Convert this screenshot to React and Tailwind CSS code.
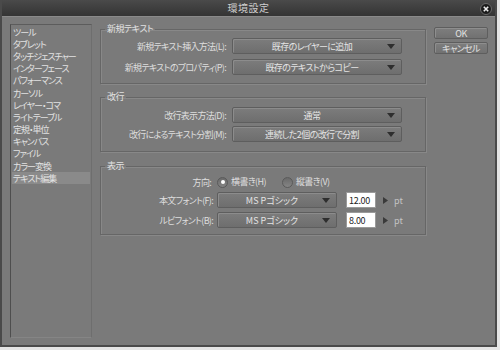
const FONT = "font-['Noto_Sans_CJK_JP','Noto_Sans',sans-serif] [font-feature-settings:'palt']";

const CATEGORIES = [
  'ツール',
  'タブレット',
  'タッチジェスチャー',
  'インターフェース',
  'パフォーマンス',
  'カーソル',
  'レイヤー・コマ',
  'ライトテーブル',
  '定規・単位',
  'キャンバス',
  'ファイル',
  'カラー変換',
  'テキスト編集',
];

function Arrow() {
  return (
    <svg width="8" height="5" viewBox="0 0 8 5" className="shrink-0">
      <path d="M0 0 H8 L4 5 Z" fill="#2e2e2e" />
    </svg>
  );
}

function Dropdown({ value, width, tight = true }) {
  return (
    <div
      className={`${width} h-[16px] flex items-center pl-[4px] pr-[6px] rounded-[2px] border border-[#5e5e5e] bg-gradient-to-b from-[#7c7c7c] to-[#6e6e6e] shadow-[inset_1px_1px_0_#8c8c8c]`}
    >
      <span
        className={`flex-1 text-center text-[9px] leading-none text-[#e4e4e4] whitespace-nowrap ${
          tight ? 'tracking-[-0.6px]' : 'tracking-[0px]'
        }`}
      >
        {value}
      </span>
      <Arrow />
    </div>
  );
}

function Group({ title, children, className }) {
  return (
    <fieldset className={`border border-[#666] shadow-[inset_1px_1px_0_#888,1px_1px_0_#888] px-0 ${className}`}>
      <legend className="ml-[4px] px-[2px] text-[9px] leading-[12px] tracking-[-0.5px] text-[#e2e2e2]">{title}</legend>
      {children}
    </fieldset>
  );
}

function Row({ label, children, labelWidth = 'w-[125px]', gap = 'ml-[6px]' }) {
  return (
    <div className="flex items-center">
      <span className={`${labelWidth} text-right text-[9px] leading-none tracking-[-0.7px] text-[#dedede] whitespace-nowrap`}>{label}</span>
      <div className={`${gap} flex items-center`}>{children}</div>
    </div>
  );
}

function Radio({ checked }) {
  return (
    <span className="w-[11px] h-[11px] rounded-full border border-[#5a5a5a] bg-gradient-to-b from-[#6a6a6a] to-[#858585] flex items-center justify-center shrink-0">
      {checked && <span className="w-[4px] h-[4px] rounded-full bg-white" />}
    </span>
  );
}

function SizeField({ value }) {
  return (
    <div className="flex items-center">
      <div className="ml-[9px] w-[30px] h-[16px] bg-white border border-[#9a9a9a] flex items-center pl-[2px] text-[9px] leading-none tracking-[-0.3px] text-[#222]">
        {value}
      </div>
      <svg width="5" height="7" viewBox="0 0 5 7" className="ml-[7px]">
        <path d="M0 0 L5 3.5 L0 7 Z" fill="#3a3a3a" />
      </svg>
      <span className="ml-[6px] text-[9px] leading-none text-[#c4c4c4]">pt</span>
    </div>
  );
}

export default function App() {
  return (
    <div className={`w-[500px] h-[350px] bg-[#e4e4e4] ${FONT}`}>
      <div className="w-[497px] h-[347px] border-2 border-t-0 border-[#4a4a4a] bg-[#7a7a7a] flex flex-col">
        {/* title bar */}
        <div className="h-[17px] shrink-0 bg-gradient-to-b from-[#4a4a4a] to-[#343434] border-b border-[#8a8a8a] flex items-center justify-center relative">
          <span className="text-[10px] leading-none text-[#cfcfcf] tracking-[0.5px]">環境設定</span>
          <svg width="12" height="12" viewBox="0 0 12 12" className="absolute right-[3px] top-[3px]">
            <circle cx="6" cy="6" r="5.5" fill="#1c1c1c" stroke="#6a6a6a" />
            <path d="M3.8 3.8 L8.2 8.2 M8.2 3.8 L3.8 8.2" stroke="#eee" strokeWidth="1.6" />
          </svg>
        </div>

        <div className="flex pl-[8px] pt-[6px]">
          {/* category list */}
          <div className="mt-[1px] w-[82px] h-[314px] border border-[#5c5c5c] border-l-[#4e4e4e] border-b-[#858585] border-r-[#6e6e6e] pt-[1px] px-[1px]">
            {CATEGORIES.map((c, i) => (
              <div
                key={c}
                className={`h-[12.2px] flex items-center pl-[1px] text-[9px] leading-none tracking-[-1px] text-[#e2e2e2] whitespace-nowrap ${
                  i === CATEGORIES.length - 1 ? 'bg-[#8a8a8a]' : ''
                }`}
              >
                {c}
              </div>
            ))}
          </div>

          {/* groups */}
          <div className="ml-[8px] w-[326px] flex flex-col">
            <Group title="新規テキスト" className="pt-[3px] pb-[8px]">
              <div className="flex flex-col gap-[5px]">
                <Row label="新規テキスト挿入方法(L):">
                  <Dropdown value="既存のレイヤーに追加" width="w-[170px]" />
                </Row>
                <Row label="新規テキストのプロパティ(P):">
                  <Dropdown value="既存のテキストからコピー" width="w-[170px]" />
                </Row>
              </div>
            </Group>

            <Group title="改行" className="mt-[7px] pt-[4px] pb-[9px]">
              <div className="flex flex-col gap-[3px]">
                <Row label="改行表示方法(D):">
                  <Dropdown value="通常" width="w-[170px]" />
                </Row>
                <Row label="改行によるテキスト分割(M):">
                  <Dropdown value="連続した2個の改行で分割" width="w-[170px]" />
                </Row>
              </div>
            </Group>

            <Group title="表示" className="mt-[8px] pt-[4px] pb-[6px]">
              <div className="flex flex-col">
                <Row label="方向:" labelWidth="w-[110px]" gap="ml-[6px]">
                  <Radio checked />
                  <span className="ml-[3px] text-[9px] leading-[12px] tracking-[-0.6px] text-[#dedede]">横書き(H)</span>
                  <span className="ml-[16px]">
                    <Radio />
                  </span>
                  <span className="ml-[3px] text-[9px] leading-[12px] tracking-[-0.6px] text-[#dedede]">縦書き(V)</span>
                </Row>
                <div className="mt-[4px]">
                  <Row label="本文フォント(F):" labelWidth="w-[112px]" gap="ml-[4px]">
                    <Dropdown value="MS Pゴシック" width="w-[120px]" tight={false} />
                    <SizeField value="12.00" />
                  </Row>
                </div>
                <div className="mt-[4px]">
                  <Row label="ルビフォント(B):" labelWidth="w-[112px]" gap="ml-[4px]">
                    <Dropdown value="MS Pゴシック" width="w-[120px]" tight={false} />
                    <SizeField value="8.00" />
                  </Row>
                </div>
              </div>
            </Group>
          </div>

          {/* buttons */}
          <div className="ml-[8px] w-[54px] pt-[4px] flex flex-col gap-[3px]">
            {['OK', 'キャンセル'].map((b) => (
              <div
                key={b}
                className="h-[12px] flex items-center justify-center rounded-[2px] border border-[#5e5e5e] bg-gradient-to-b from-[#7e7e7e] to-[#717171] shadow-[inset_1px_1px_0_#8e8e8e] text-[9px] leading-none tracking-[-0.6px] text-[#e2e2e2]"
              >
                {b}
              </div>
            ))}
          </div>
        </div>
      </div>
    </div>
  );
}
